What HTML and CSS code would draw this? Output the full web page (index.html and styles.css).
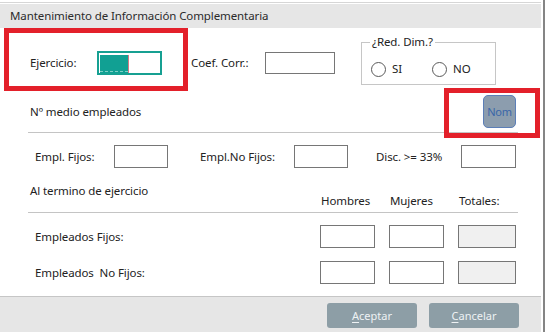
FILE: index.html
```html
<!DOCTYPE html>
<html lang="es">
<head>
<meta charset="utf-8">
<title>Mantenimiento de Información Complementaria</title>
<link rel="stylesheet" href="styles.css">
</head>
<body>
<div class="frame">
  <div class="topline"></div>
  <div class="titlebar">Mantenimiento de Información Complementaria</div>
  <div class="content">
    <div class="row row1">
      <span class="lbl w-ej">Ejercicio:</span>
      <span class="input focused"><span class="sel"></span><span class="caret"></span></span>
      <span class="lbl w-coef">Coef. Corr.:</span>
      <span class="input coef"></span>
      <fieldset class="group">
        <legend>¿Red. Dim.?</legend>
        <label class="radio si"><span class="circle"></span>SI</label>
        <label class="radio"><span class="circle"></span>NO</label>
      </fieldset>
    </div>
    <div class="row row2">
      <span class="lbl">Nº medio empleados</span>
      <button class="nom">Nom</button>
    </div>
    <div class="row row3">
      <span class="lbl w-f1">Empl. Fijos:</span>
      <span class="input small"></span>
      <span class="lbl w-f2">Empl.No Fijos:</span>
      <span class="input small"></span>
      <span class="lbl w-f3">Disc. &gt;= 33%</span>
      <span class="input small wide"></span>
    </div>
    <div class="table">
      <span class="lbl ttl">Al termino de ejercicio</span>
      <span class="hdr">Hombres</span>
      <span class="hdr">Mujeres</span>
      <span class="hdr">Totales:</span>
      <div class="hline"></div>
      <span class="lbl rlbl">Empleados Fijos:</span>
      <span class="input cell"></span>
      <span class="input cell"></span>
      <span class="input cell total"></span>
      <span class="lbl rlbl">Empleados  No Fijos:</span>
      <span class="input cell"></span>
      <span class="input cell"></span>
      <span class="input cell total"></span>
    </div>
  </div>
  <div class="footer">
    <button class="btn"><u>A</u>ceptar</button>
    <button class="btn"><u>C</u>ancelar</button>
  </div>
  <div class="mark mark1"></div>
  <div class="mark mark2"></div>
</div>
</body>
</html>
```

FILE: styles.css
```css
* { box-sizing: border-box; }
html, body { margin: 0; padding: 0; background: #fff; }
body {
  width: 549px;
  height: 332px;
  overflow: hidden;
  font-family: "Noto Sans", "Open Sans", sans-serif;
  font-size: 11.5px;
  letter-spacing: -0.1px;
  color: #222;
}
.frame {
  position: relative;
  width: 545px;
  height: 332px;
  padding-top: 2px;
  padding-right: 2px;
  border-right: 2px solid #858585;
  display: flex;
  flex-direction: column;
}
.topline {
  height: 2px;
  border-top: 1px solid #d6d6d6;
}
.titlebar {
  height: 24px;
  line-height: 24px;
  background: #e6e6e6;
  padding-left: 10px;
  color: #2b2b2b;
  white-space: nowrap;
}
.content {
  margin-left: 28px;
  width: 490px;
}
.row {
  display: flex;
  align-items: center;
}
.lbl { line-height: 16px; white-space: pre; padding-left: 2px; }
.input {
  display: block;
  flex: none;
  border: 1px solid #767676;
  background: #fff;
  height: 23px;
}
.row1 { height: 68px; padding-top: 2px; align-items: center; }
.w-ej { width: 69px; }
.input.focused {
  width: 65px;
  height: 24px;
  border: 2px solid #16a092;
  padding: 1px;
  display: flex;
  align-items: flex-start;
}
.sel {
  width: 28px;
  height: 17px;
  margin-top: 1px;
  background: #11a093;
  border-bottom: 1px dashed #7fcfc6;
  box-shadow: 0 1px 0 #11a093;
}
.caret {
  width: 1px;
  height: 18px;
  margin-top: 1px;
  background: #d47a84;
}
.w-coef { width: 76px; margin-left: 27px; }
.input.coef { width: 70px; height: 22px; }
.group {
  align-self: flex-start;
  margin: 4px 0 0 26px;
  width: 135px;
  height: 51px;
  border: 1px solid #c6c6c6;
  padding: 4px 0 0 9px;
  display: flex;
  align-items: center;
}
.group legend {
  padding: 0 2px;
  margin-left: -1px;
  line-height: 16px;
  color: #222;
}
.radio {
  display: flex;
  align-items: center;
  gap: 6px;
  line-height: 16px;
}
.radio.si { width: 61px; }
.circle {
  width: 15px;
  height: 15px;
  border: 1px solid #5a5a5a;
  border-radius: 50%;
  background: #fff;
}
.row2 {
  height: 33px;
  justify-content: space-between;
  padding-right: 2px;
  margin-top: -1px;
}
.row2 .lbl { margin-top: 0; }
.nom {
  width: 33px;
  height: 33px;
  padding: 0;
  border: 1px solid #5c7fb8;
  border-radius: 5px;
  background: #8c9dae;
  color: #3a66a8;
  font-family: "Noto Sans", sans-serif;
  font-size: 11px;
  letter-spacing: -0.2px;
}
.row3 {
  border-top: 1px solid #c4c4c4;
  margin-top: 4px;
  padding-top: 12px;
}
.row3 .lbl { padding-left: 7px; }
.w-f1 { width: 86px; }
.input.small { width: 54px; height: 23px; }
.input.small.wide { width: 55px; }
.w-f2 { width: 126px; padding-left: 32px !important; }
.w-f3 { width: 113px; padding-left: 28px !important; }
.table {
  margin-top: 15px;
  display: grid;
  grid-template-columns: 278px 55px 55px 58px;
  column-gap: 14px;
  grid-template-rows: 29px 1px 35px 36px;
}
.ttl { align-self: start; }
.hdr {
  align-self: end;
  line-height: 16px;
  padding-left: 1px;
  margin-bottom: 3px;
}
.hline {
  grid-column: 1 / -1;
  width: 490px;
  background: #c4c4c4;
}
.rlbl { padding-left: 7px; align-self: end; margin-bottom: 3px; }
.input.cell { align-self: end; height: 23px; }
.input.total { background: #f0f0f0; }
.footer {
  margin-top: auto;
  height: 36px;
  border-top: 1px solid #c6c6c6;
  background: #e6e6e6;
  display: flex;
  justify-content: flex-end;
  align-items: flex-start;
  gap: 12px;
  padding: 6px 22px 0 0;
}
.btn {
  width: 90px;
  height: 25px;
  border: none;
  border-radius: 3px;
  background: #8d9ea6;
  color: #eef2f4;
  font-family: "Noto Sans", sans-serif;
  font-size: 11px;
  letter-spacing: 0;
  padding: 0;
}
.btn u { text-decoration-thickness: 1px; text-underline-offset: 2px; }
.mark {
  position: absolute;
  border: 5px solid #e3202a;
}
.mark1 { left: 4px; top: 28px; width: 184px; height: 63px; }
.mark2 { left: 444px; top: 88px; width: 96px; height: 50px; }
```
